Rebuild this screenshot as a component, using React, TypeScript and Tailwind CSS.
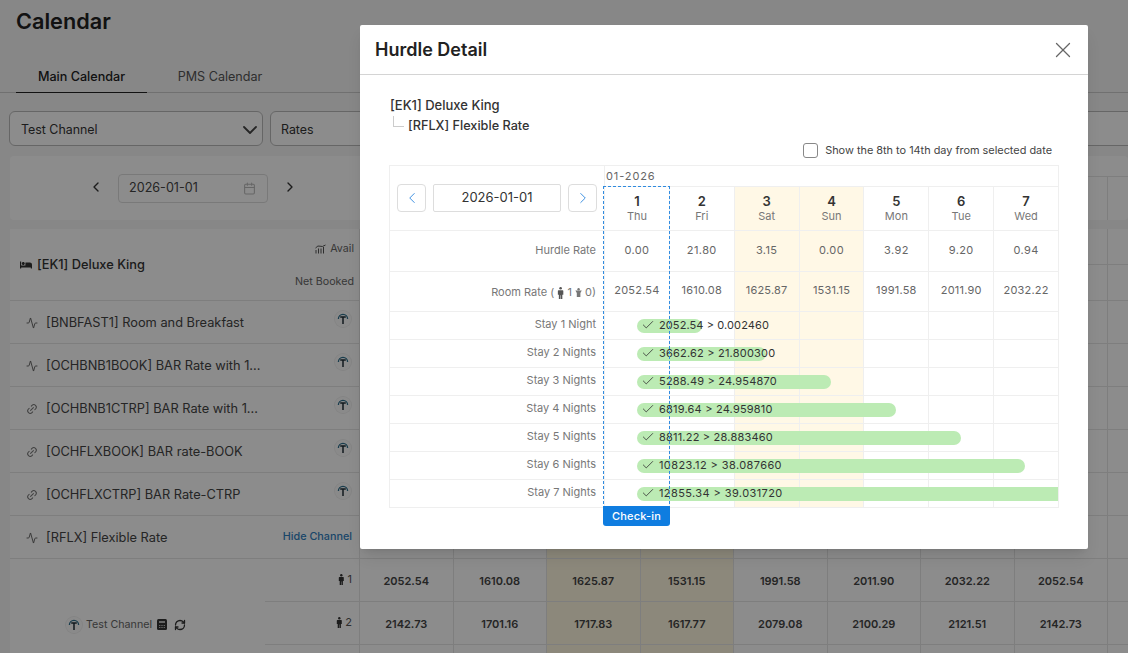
import React from "react";
import { Check, ChevronDown, ChevronLeft, ChevronRight, Calendar, X, Activity, Link2, RefreshCw } from "lucide-react";
import { FaBed } from "react-icons/fa";

const F = { fontFamily: "Inter, 'Noto Sans', sans-serif" };

function Person({ size = 11, cls = "" }: { size?: number; cls?: string }) {
  return (
    <svg width={size * 0.6} height={size} viewBox="0 0 6 11" className={cls} fill="currentColor">
      <circle cx="3" cy="1.2" r="1.2" />
      <path d="M1 3h4l.5.5V7H4.6v4H3.2V7.5h-.4V11H1.4V7H.5V3.5z" />
    </svg>
  );
}
function Child({ size = 9 }: { size?: number }) {
  return (
    <svg width={size * 0.8} height={size} viewBox="0 0 7 9" fill="currentColor">
      <circle cx="3.5" cy="1.2" r="1.2" />
      <path d="M.3 2.6h6.4L5.3 5v4H1.7V5z" />
    </svg>
  );
}
function TLogo() {
  return (
    <span className="flex items-center justify-center rounded-full bg-[#fcfcfc] ring-1 ring-[#f0f0f0] w-[16px] h-[16px]">
      <svg width="12" height="12" viewBox="0 0 12 12" fill="none" stroke="#2f6f8c" strokeWidth="1.3">
        <path d="M1.4 6a4.6 4.6 0 0 1 9.2 0" />
        <path d="M3.2 4h5.6M6 4v7" stroke="#1f2f38" strokeWidth="1.5" />
      </svg>
    </span>
  );
}
function AvailIcon() {
  return (
    <svg width="11" height="10" viewBox="0 0 11 10" fill="none" stroke="#555" strokeWidth="1">
      <path d="M1 9.5V6M3.5 9.5V4.5M6 9.5V4.5M8.5 9.5V3" />
      <path d="M.5 4 Q3 1 5 2.2T10.5 1" />
    </svg>
  );
}
function CalcIcon() {
  return (
    <svg width="10" height="11" viewBox="0 0 10 11">
      <rect x="0" y="0" width="10" height="11" rx="1.5" fill="#333" />
      <rect x="2" y="2" width="6" height="2" fill="#bbb" />
      <path d="M2 6h1.4v1H2zM4.3 6h1.4v1H4.3zM6.6 6H8v1H6.6zM2 8h1.4v1H2zM4.3 8h1.4v1H4.3zM6.6 8H8v1H6.6z" fill="#bbb" />
    </svg>
  );
}

const rates = [
  ["activity", "[BNBFAST1] Room and Breakfast"],
  ["activity", "[OCHBNB1BOOK] BAR Rate with 1..."],
  ["link", "[OCHBNB1CTRP] BAR Rate with 1..."],
  ["link", "[OCHFLXBOOK] BAR rate-BOOK"],
  ["link", "[OCHFLXCTRP] BAR Rate-CTRP"],
];

const bgRow1 = ["2052.54", "1610.08", "1625.87", "1531.15", "1991.58", "2011.90", "2032.22", "2052.54"];
const bgRow2 = ["2142.73", "1701.16", "1717.83", "1617.77", "2079.08", "2100.29", "2121.51", "2142.73"];
const blank = ["", "", "", "", "", "", "", ""];

function GridRow({ values, h }: { values: string[]; h: string }) {
  return (
    <div className={`flex ${h} border-b border-[#e5e5e5]`}>
      {values.map((v, i) => (
        <div
          key={i}
          className={`w-[93.5px] shrink-0 flex items-center justify-center pt-[3px] border-r border-[#e5e5e5] text-[11px] font-semibold text-[#444] ${i === 2 || i === 3 ? "bg-[#fff8e1]" : ""}`}
        >
          {v}
        </div>
      ))}
      <div className="flex-1" />
    </div>
  );
}

function Background() {
  return (
    <div className="h-[653px] overflow-hidden bg-[#f6f6f6]">
      <h1 className="pl-4 pt-[6px] text-[21.7px] leading-[30px] font-semibold text-[#222]">Calendar</h1>
      <div className="mt-[24px] h-[33px] flex border-b border-[#ccc]">
        <div className="ml-4 w-[131px] h-[33px] pt-[2px] border-b border-[#222] flex items-center justify-center text-[12.6px] font-medium text-[#222]">Main Calendar</div>
        <div className="ml-[13px] w-[120px] pt-[2px] flex items-center justify-center text-[12.6px] text-[#555]">PMS Calendar</div>
      </div>
      <div className="flex gap-[7px] pl-[9px] mt-[18px] h-[35px]">
        <div className="w-[254px] rounded-md border border-[#bbb] bg-white flex items-center justify-between pl-[11px] pt-[3px] text-[12.4px] text-[#333]">
          Test Channel
          <ChevronDown size={24} className="text-[#444] -mt-[1px]" strokeWidth={1.8} />
        </div>
        <div className="flex-1 -mr-2 rounded-md border border-[#bbb] bg-white flex items-center pl-[10px] pt-[3px] text-[12.4px] text-[#333]">Rates</div>
      </div>
      <div className="ml-[10px] mt-[10px] h-[64px] bg-white rounded-sm flex">
        <div className="w-[350px] shrink-0 flex items-center">
          <ChevronLeft size={16} className="ml-[78px] -mt-[2px] text-[#333]" />
          <div className="ml-[14px] w-[150px] h-[29px] border border-[#ddd] rounded flex items-center justify-between pl-[10px] pr-[11px] pt-[1px] text-[12.6px] text-[#444]">
            2026-01-01
            <Calendar size={13} className="text-[#bbb]" />
          </div>
          <ChevronRight size={16} className="ml-[14px] -mt-[2px] text-[#333]" />
        </div>
        <div className="flex-1 min-w-0 flex flex-col">
          <div className="h-[21px] border-b border-[#e5e5e5]" />
          <div className="flex-1 flex">
            {blank.map((_, i) => (
              <div key={i} className="w-[93.5px] shrink-0 border-r border-[#e5e5e5]" />
            ))}
          </div>
        </div>
      </div>
      <div className="ml-[10px] mt-[9px] bg-white flex">
        <div className="w-[350px] shrink-0">
          <div className="h-[72px] border-b border-[#e5e5e5] flex items-center justify-between pl-[10px] pr-[6px]">
            <div className="flex items-center gap-[5px] text-[12.8px] font-medium text-[#333]">
              <FaBed size={12} className="text-[#333]" />
              [EK1] Deluxe King
            </div>
            <div className="h-full flex flex-col justify-between items-end pt-[13px] pb-[11px] text-[10.7px] leading-[14px] text-[#666]">
              <span className="flex items-center gap-[4px]"><AvailIcon />Avail</span>
              <span>Net Booked</span>
            </div>
          </div>
          {rates.map(([icon, name]) => (
            <div key={name} className="h-[43px] flex items-center border-b border-[#e5e5e5] pl-[16px] pr-[9px] pt-[2px]">
              {icon === "activity" ? <Activity size={12} strokeWidth={1.75} className="text-[#555]" /> : <Link2 size={12} className="text-[#777] -rotate-45" />}
              <span className="ml-2 text-[12.8px] text-[#444]">{name}</span>
              <span className="ml-auto -mt-[9px]"><TLogo /></span>
            </div>
          ))}
          <div className="h-[43px] flex items-center border-b border-[#e5e5e5] pl-[16px] pr-[8px] pt-[2px]">
            <Activity size={12} strokeWidth={1.75} className="text-[#555]" />
            <span className="ml-2 text-[12.8px] text-[#444]">[RFLX] Flexible Rate</span>
            <span className="ml-auto -mt-[2px] text-[10.8px] font-medium text-[#3080c0]">Hide Channel</span>
          </div>
          <div className="flex h-[94px]">
            <div className="w-[255px] flex items-start pl-[56px] pt-[58px] gap-[4px] text-[10.7px] leading-[16px] text-[#666]">
              <TLogo />
              <span>Test Channel</span>
              <span className="mt-[2px] ml-[1px]"><CalcIcon /></span>
              <RefreshCw size={12} className="mt-[2px] ml-[3px] text-[#333]" strokeWidth={2.6} />
            </div>
            <div className="flex-1 flex flex-col">
              <div className="h-[43px] flex items-center justify-end pr-[8px] pb-[2px] gap-[3px] border-b border-[#e5e5e5] text-[11px] text-[#555]"><Person cls="text-[#333]" />1</div>
              <div className="h-[43px] flex items-center justify-end pr-[8px] pb-[2px] gap-[3px] border-b border-[#e5e5e5] text-[11px] text-[#555]"><Person cls="text-[#333]" />2</div>
            </div>
          </div>
        </div>
        <div className="flex-1 min-w-0 border-l border-[#e5e5e5] -ml-px">
          <GridRow values={blank} h="h-[36px]" />
          <GridRow values={blank} h="h-[36px]" />
          {[0, 1, 2, 3, 4, 5].map((r) => (
            <GridRow key={r} values={blank} h="h-[43px]" />
          ))}
          <GridRow values={bgRow1} h="h-[43px]" />
          <GridRow values={bgRow2} h="h-[43px]" />
          <GridRow values={blank} h="h-[43px]" />
        </div>
      </div>
    </div>
  );
}

const days = [
  ["1", "Thu", "0.00", "2052.54"],
  ["2", "Fri", "21.80", "1610.08"],
  ["3", "Sat", "3.15", "1625.87"],
  ["4", "Sun", "0.00", "1531.15"],
  ["5", "Mon", "3.92", "1991.58"],
  ["6", "Tue", "9.20", "2011.90"],
  ["7", "Wed", "0.94", "2032.22"],
];

const stays = [
  ["Stay 1 Night", "2052.54 > 0.002460", 65, "tracking-[0.1px]"],
  ["Stay 2 Nights", "3662.62 > 21.800300", 129, "tracking-[0.2px]"],
  ["Stay 3 Nights", "5288.49 > 24.954870", 194, "tracking-[0.2px]"],
  ["Stay 4 Nights", "6819.64 > 24.959810", 259, "tracking-[0.2px]"],
  ["Stay 5 Nights", "8811.22 > 28.883460", 324, "tracking-[0.2px]"],
  ["Stay 6 Nights", "10823.12 > 38.087660", 388, "tracking-[0.4px]"],
  ["Stay 7 Nights", "12855.34 > 39.031720", 460, "tracking-[0.4px]"],
] as const;

const colW = "w-[64.86px] shrink-0";
const line = "border-[#efefef]";

function DayCells({ render, h }: { render: (d: string[], i: number) => React.ReactNode; h: string }) {
  return (
    <>
      {days.map((d, i) => (
        <div
          key={i}
          className={`${colW} ${h} border-l ${line} flex flex-col items-center justify-center ${i === 2 || i === 3 ? "bg-[#fff8e6]" : ""}`}
        >
          {render(d, i)}
        </div>
      ))}
    </>
  );
}

function Modal() {
  return (
    <div className="absolute left-[360px] top-[25px] w-[728px] h-[524px] bg-white rounded-[2px] shadow-lg">
      <div className="h-[50px] border-b border-[#d4d4d4] flex items-center justify-between pl-[15px] pr-[12px]">
        <span className="text-[18px] font-semibold text-[#222]">Hurdle Detail</span>
        <X size={26} className="text-[#666]" strokeWidth={1.2} />
      </div>
      <div className="pl-[30px] pt-[20px] font-medium text-[#333] leading-[20px]">
        <div className="text-[13px]">[EK1] Deluxe King</div>
        <div className="flex items-start mt-[1px] text-[12.7px]">
          <span className="ml-[3px] w-[11px] h-[11px] border-l border-b border-[#ccc] mr-[4px]" />
          <span>[RFLX] Flexible Rate</span>
        </div>
      </div>
      <div className="mt-[5px] flex items-center justify-end pr-[36px] h-[18px] gap-[7px] text-[10.9px] text-[#444]">
        <span className="w-[15px] h-[15px] rounded-[3px] border border-[#888]" />
        Show the 8th to 14th day from selected date
      </div>
      <div className="relative ml-[29px] mt-[6px] w-[670px] border border-[#efefef] text-[11px] text-[#666]">
        {/* header */}
        <div className="flex h-[65px] border-b border-[#efefef]">
          <div className="w-[214px] shrink-0 flex items-center pl-[7px] gap-[7px]">
            <span className="w-[29px] h-[28px] border border-[#ddd] rounded flex items-center justify-center text-[#3b8fe0]"><ChevronLeft size={18} strokeWidth={1.3} /></span>
            <span className="w-[128px] h-[28px] border border-[#ddd] rounded-[2px] flex items-center justify-center text-[13px] text-[#333]">2026-01-01</span>
            <span className="w-[29px] h-[28px] border border-[#ddd] rounded flex items-center justify-center text-[#3b8fe0]"><ChevronRight size={18} strokeWidth={1.3} /></span>
          </div>
          <div className="flex-1 min-w-0">
            <div className={`h-[21px] border-l border-b ${line} pl-[1px] flex items-center text-[11px] tracking-[0.9px] text-[#666]`}>01-2026</div>
            <div className="flex h-[43px]">
              <DayCells
                h="h-[43px] pb-[1px]"
                render={(d) => (
                  <>
                    <span className="text-[13px] leading-[15px] font-semibold text-[#333]">{d[0]}</span>
                    <span className="text-[11px] leading-[14px] text-[#777]">{d[1]}</span>
                  </>
                )}
              />
            </div>
          </div>
        </div>
        {/* hurdle */}
        <div className="flex h-[41px] border-b border-[#efefef]">
          <div className="w-[214px] shrink-0 flex items-center justify-end pr-[8px] pb-[1px] text-[#777]">Hurdle Rate</div>
          <DayCells h="h-[40px] pb-[1px]" render={(d) => <span className="tracking-[0.4px]">{d[2]}</span>} />
        </div>
        {/* room */}
        <div className="flex h-[40px] border-b border-[#efefef]">
          <div className="w-[214px] shrink-0 flex items-center justify-end pr-[8px] gap-[3px] text-[#777] pt-[2px] text-[11px]">
            Room Rate ( <Person size={12} cls="text-[#555]" /> 1 <Child /> 0)
          </div>
          <DayCells h="h-[39px] pb-[2px]" render={(d) => <span className="tracking-[0.2px]">{d[3]}</span>} />
        </div>
        {/* stays */}
        {stays.map(([label, text, w, track], idx) => (
          <div key={label} className={`flex ${idx < 6 ? "h-[28px] border-b border-[#efefef]" : "h-[27px]"} overflow-hidden`}>
            <div className="w-[214px] shrink-0 flex items-center justify-end pr-[8px] pb-[3px] text-[#777]">{label}</div>
            <div className="relative flex flex-1 min-w-0 overflow-hidden">
              <DayCells h="h-[28px]" render={() => null} />
              <div className="absolute left-[33px] top-[7px] h-[14px] rounded-full bg-[#bcebb4]" style={{ width: w }} />
              <div className={`absolute left-[37px] top-[5px] h-[16px] flex items-center gap-[4px] whitespace-nowrap text-[11px] ${track} text-[#333]`}>
                <Check size={14} className="text-[#333]" strokeWidth={1.4} />
                {text}
              </div>
            </div>
          </div>
        ))}
        {/* check-in overlay */}
        <div className="absolute left-[213px] top-[20px] w-[67px] h-[320px] pointer-events-none">
          <div className="absolute left-0 right-0 top-0 h-px bg-[repeating-linear-gradient(to_right,#2f8be0_0_3px,transparent_3px_5px)]" />
          <div className="absolute left-0 top-0 bottom-0 w-px bg-[repeating-linear-gradient(to_bottom,#2f8be0_0_3px,transparent_3px_5px)]" />
          <div className="absolute right-0 top-0 bottom-0 w-px bg-[repeating-linear-gradient(to_bottom,#2f8be0_0_3px,transparent_3px_5px)]" />
        </div>
        <div className="absolute left-[213px] top-[340px] w-[67px] h-[20px] rounded-b-[3px] bg-[#0f7de0] text-white text-[11px] font-medium flex items-center justify-center tracking-[0.2px]">Check-in</div>
      </div>
    </div>
  );
}

export default function App() {
  return (
    <div className="relative w-[1128px] h-[653px] overflow-hidden" style={F}>
      <Background />
      <div className="absolute inset-0 bg-black/45" />
      <Modal />
    </div>
  );
}
